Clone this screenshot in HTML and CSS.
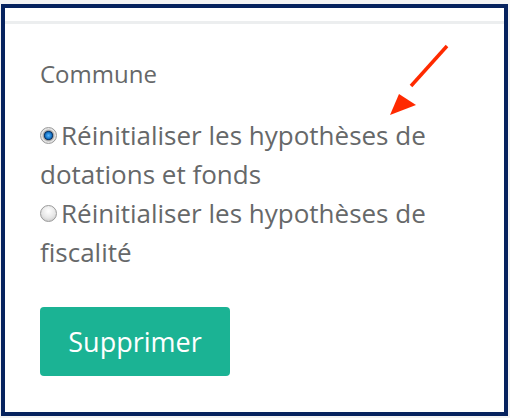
FILE: index.html
```html
<!DOCTYPE html>
<html lang="fr">
<head>
  <meta charset="UTF-8">
  <meta name="viewport" content="width=device-width, initial-scale=1.0">
  <title>Supprimer hypothèses</title>
  <link rel="stylesheet" href="styles.css">
</head>
<body>
  <div class="frame">
    <div class="panel-head"></div>
    <form class="panel-body">
      <label class="group-label">Commune</label>
      <label class="radio">
        <input type="radio" name="reset" value="dotations" checked>Réinitialiser les hypothèses de dotations et fonds
      </label>
      <label class="radio">
        <input type="radio" name="reset" value="fiscalite">Réinitialiser les hypothèses de fiscalité
      </label>
      <button type="button" class="btn-danger">Supprimer</button>
    </form>

    <svg class="arrow" width="70" height="80" viewBox="0 0 70 80">
      <line x1="58" y1="4" x2="22" y2="44" stroke="#ff2a00" stroke-width="3.5"/>
      <polygon points="1,73 10,52 27,63" fill="#ff2a00"/>
    </svg>
  </div>
</body>
</html>
```

FILE: styles.css
```css
html {
  background: #f3f3f4;
}

body {
  margin: 0;
  font-family: 'Open Sans', 'Liberation Sans', sans-serif;
  color: #666869;
}

.frame {
  position: relative;
  margin: 4px 2px 2px 1px;
  height: 404px;
  background: #fff;
  border: 4px solid #06225e;
}

.panel-head {
  height: 13px;
  border-bottom: 3px solid #eceeef;
}

.panel-body {
  padding: 33px 30px 0 35px;
}

.group-label {
  display: block;
  font-size: 24px;
  line-height: 34px;
  margin-bottom: 25px;
}

.radio {
  display: block;
  font-size: 26px;
  line-height: 39px;
}

.radio input {
  appearance: none;
  -webkit-appearance: none;
  box-sizing: border-box;
  width: 17px;
  height: 17px;
  margin: 0 4px 0 0;
  border-radius: 50%;
  border: 1px solid #9a9a9a;
  background: radial-gradient(circle at 50% 35%, #ffffff 0, #e6e6e6 55%, #bdbdbd 100%);
  vertical-align: 1px;
}

.radio input:checked {
  background: radial-gradient(circle at 50% 50%, #5ab8ff 0, #1877c9 28%, #0a3466 40%, #9b9b9b 46%, #e9e9e9 62%, #c4c4c4 100%);
}

.btn-danger {
  margin-top: 35px;
  width: 190px;
  height: 69px;
  background: #1bb394;
  border: none;
  border-radius: 4px;
  color: #fff;
  font-family: inherit;
  font-size: 27px;
}

.arrow {
  position: absolute;
  left: 384px;
  top: 34px;
}
```
